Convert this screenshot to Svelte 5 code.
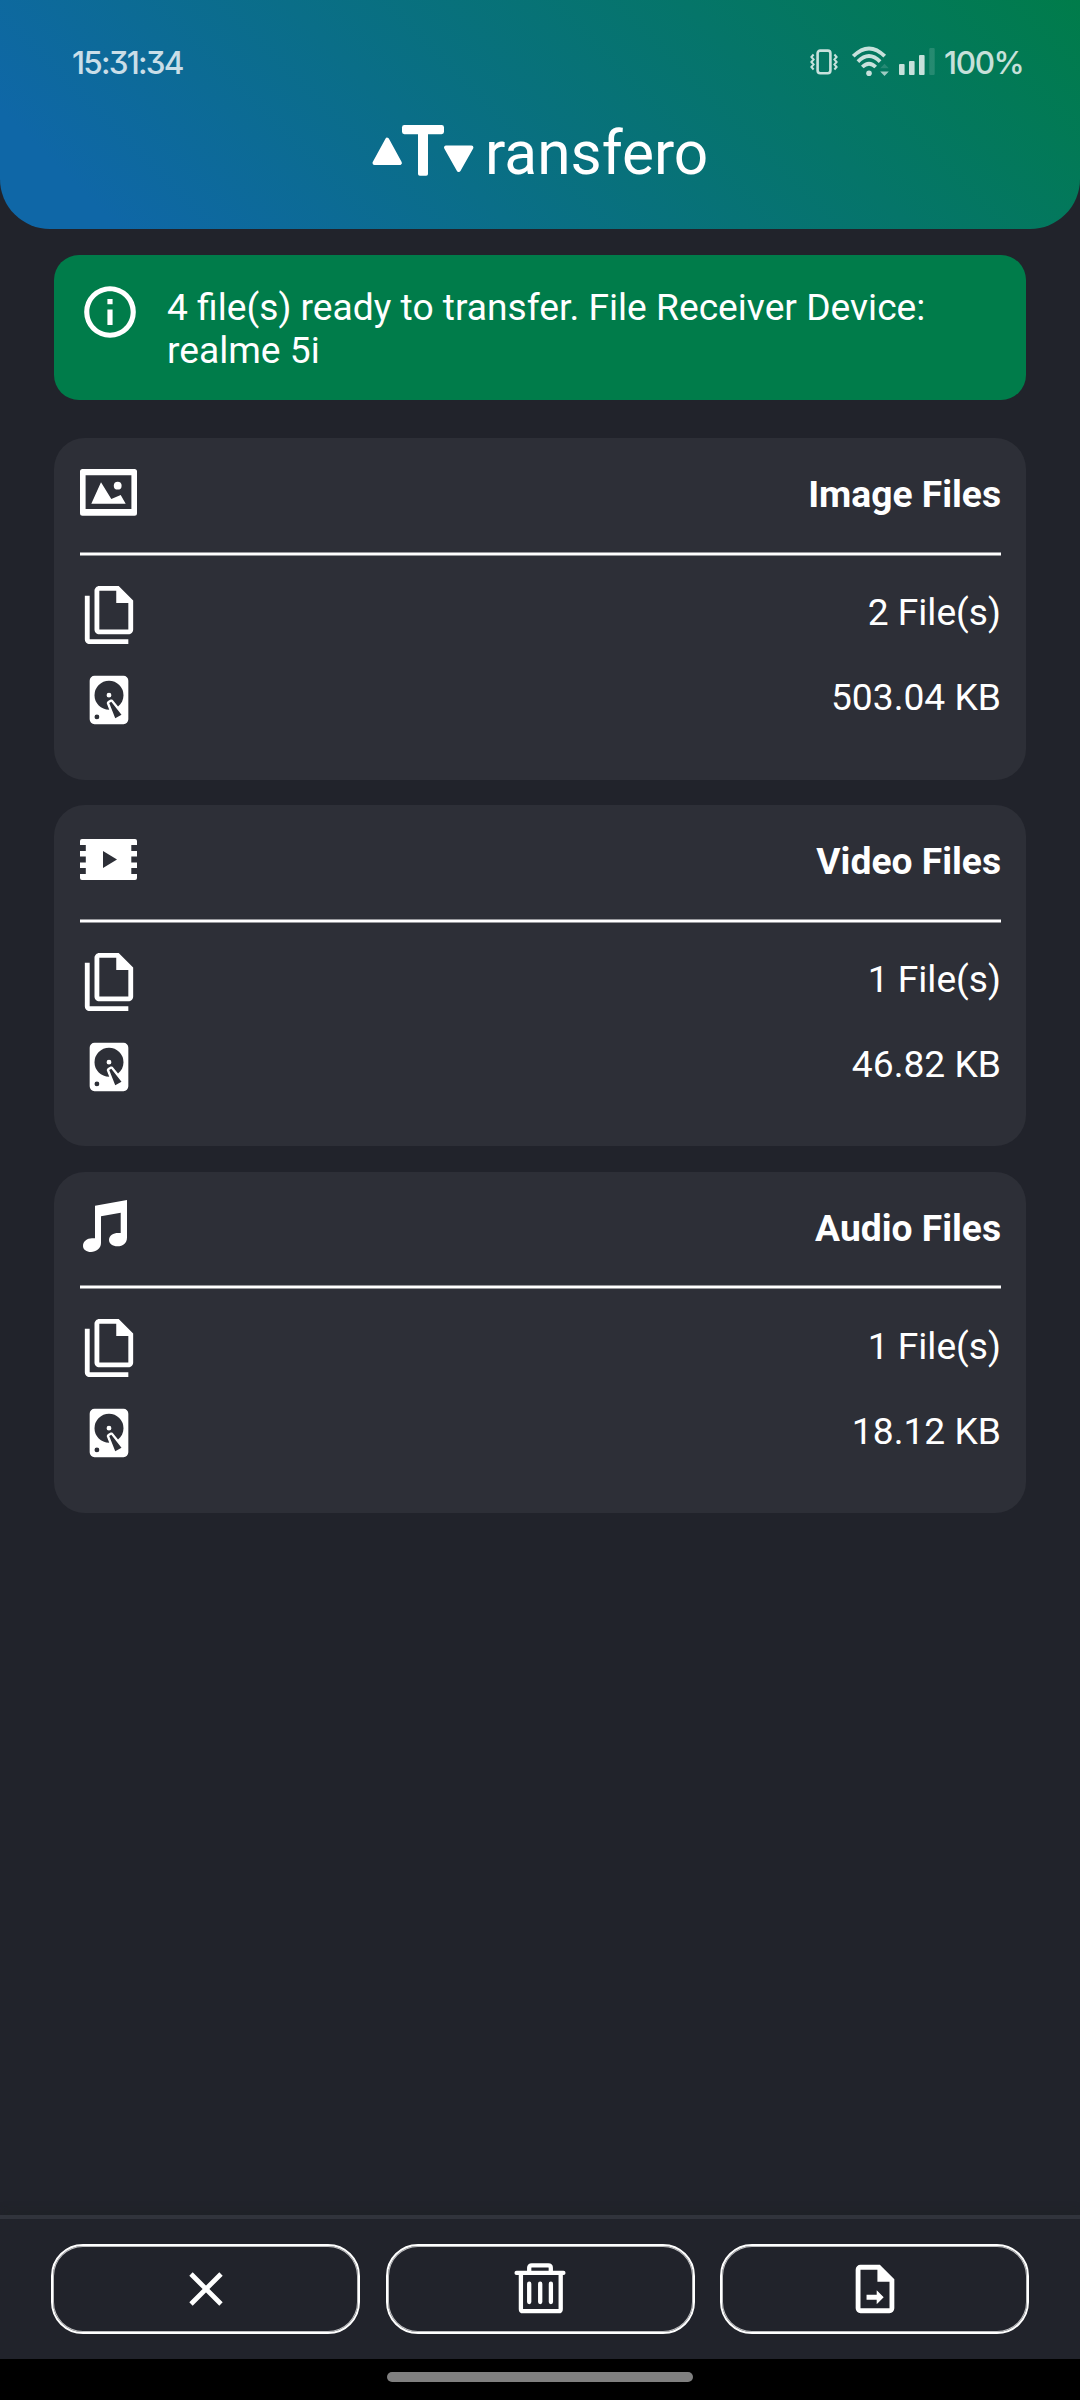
<script>
  const groups = [
    { kind: 'image', title: 'Image Files', count: '2 File(s)', size: '503.04 KB' },
    { kind: 'video', title: 'Video Files', count: '1 File(s)', size: '46.82 KB' },
    { kind: 'audio', title: 'Audio Files', count: '1 File(s)', size: '18.12 KB' }
  ];
</script>

<div class="screen">
  <header>
    <div class="status">
      <span class="clock">15:31:34</span>
      <div class="indicators">
        <svg class="vibrate" width="28" height="26" viewBox="0 0 28 26">
          <rect x="7.6" y="1.6" width="12.8" height="22.6" rx="2.6" />
          <path d="M3.6 5.5L1.4 8L3.6 10.5L1.4 13L3.6 15.5L1.4 18L3.6 20.5M24.4 5.5L26.6 8L24.4 10.5L26.6 13L24.4 15.5L26.6 18L24.4 20.5" />
        </svg>
        <svg class="wifi" width="38" height="32" viewBox="0 0 38 32">
          <path class="arc" d="M1.3 10.2Q17 -5.4 32.7 10.2M5.9 15.6Q17 4.6 28.1 15.6M10.3 21Q17 14.6 23.7 21" />
          <circle cx="17" cy="27.3" r="2.8" />
          <path class="faint" d="M28.2 22.2L32.5 17.8L36.8 22.2Z" />
          <path class="half" d="M28.2 25.5L32.5 30L36.8 25.5Z" />
        </svg>
        <svg class="signal" width="36" height="28" viewBox="0 0 36 28">
          <rect x="0" y="16" width="5.6" height="11" rx="1" />
          <rect x="10" y="13" width="5.6" height="14" rx="1" />
          <rect x="20" y="7" width="5.6" height="20" rx="1" />
          <rect class="faint" x="30.3" y="0" width="5.4" height="27" rx="1" />
        </svg>
        <span class="battery">100%</span>
      </div>
    </div>
    <div class="brand">
      <svg class="mark" width="103" height="52" viewBox="0 0 103 52" aria-label="T">
        <path class="tri" d="M15.2 14.7L27.9 38H2.5Z" />
        <rect x="30" y="0" width="42" height="9.2" rx="2.4" />
        <rect x="46" y="2" width="10" height="48.8" rx="1.8" />
        <path class="tri" d="M74 22.5H99.4L86.7 45Z" />
      </svg>
      <span class="name">ransfero</span>
    </div>
  </header>

  <main>
    <section class="notice">
      <svg width="62" height="62" viewBox="0 0 24 24">
        <path d="M11 9h2V7h-2m1 13c-4.41 0-8-3.59-8-8s3.59-8 8-8 8 3.59 8 8-3.59 8-8 8m0-18A10 10 0 0 0 2 12a10 10 0 0 0 10 10 10 10 0 0 0 10-10A10 10 0 0 0 12 2m-1 15h2v-6h-2v6Z" />
      </svg>
      <p>4 file(s) ready to transfer. File Receiver Device: realme 5i</p>
    </section>

    <div class="cards">
      {#each groups as group}
        <article>
          <div class="head">
            {#if group.kind === 'image'}
              <svg width="57" height="47" viewBox="0 0 57 47">
                <path fill-rule="evenodd" d="M2.5 0H54.5A2.5 2.5 0 0 1 57 2.5V44.3A2.5 2.5 0 0 1 54.5 46.8H2.5A2.5 2.5 0 0 1 0 44.3V2.5A2.5 2.5 0 0 1 2.5 0ZM5.6 6.3V40H51.4V6.3Z" />
                <path d="M11.3 34.7L21 13.3L31.3 30L40.7 26L45.7 34.7Z" />
                <circle cx="37.7" cy="16.7" r="3.9" />
              </svg>
            {:else if group.kind === 'video'}
              <svg width="57" height="41" viewBox="0 0 57 41">
                <path fill-rule="evenodd" d="M2 0H55A2 2 0 0 1 57 2V6H51.3V12H57V17.6H51.3V23.4H57V29H51.3V35H57V39A2 2 0 0 1 55 41H2A2 2 0 0 1 0 39V35H5.8V29H0V23.4H5.8V17.6H0V12H5.8V6H0V2A2 2 0 0 1 2 0ZM23 12V29L37 20.5Z" />
              </svg>
            {:else}
              <svg class="notes" width="44" height="52" viewBox="0 0 44 52">
                <path d="M12 5.7L44 0V37.5C44 43 40 46.3 34.5 46.3C29.5 46.3 26 43.7 26 40C26 35.5 30.5 33 35 33H37.7V12.7L18 16.3V43C18 48.5 13 52 8 52C3.5 52 0 49.5 0 46C0 41.5 4 38.3 9 38.3H12Z" />
              </svg>
            {/if}
            <h2>{group.title}</h2>
          </div>
          <div class="rule"></div>
          <div class="row">
            <svg width="58" height="58" viewBox="0 0 24 24">
              <path d="M16 0H8C6.9 0 6 .9 6 2V18C6 19.1 6.9 20 8 20H20C21.1 20 22 19.1 22 18V6L16 0M20 18H8V2H15V7H20V18M4 4V22H20V24H4C2.9 24 2 23.1 2 22V4H4Z" />
            </svg>
            <span>{group.count}</span>
          </div>
          <div class="row">
            <svg width="58" height="58" viewBox="0 0 24 24">
              <path d="M6,2H18A2,2 0 0,1 20,4V20A2,2 0 0,1 18,22H6A2,2 0 0,1 4,20V4A2,2 0 0,1 6,2M12,4A6,6 0 0,0 6,10C6,13.31 8.69,16 12.1,16L11.22,13.77C10.95,13.29 11.11,12.68 11.59,12.4L12.45,11.9C12.93,11.63 13.54,11.79 13.82,12.27L15.74,14.69C17.12,13.59 18,11.9 18,10A6,6 0 0,0 12,4M12,9A1,1 0 0,1 13,10A1,1 0 0,1 12,11A1,1 0 0,1 11,10A1,1 0 0,1 12,9M7,18A1,1 0 0,0 6,19A1,1 0 0,0 7,20A1,1 0 0,0 8,19A1,1 0 0,0 7,18M12.09,13.27L14.58,19.58L17.17,18.08L12.95,12.77L12.09,13.27Z" />
            </svg>
            <span>{group.size}</span>
          </div>
        </article>
      {/each}
    </div>
  </main>

  <footer>
    <button aria-label="Cancel">
      <svg class="cross" width="34" height="34" viewBox="0 0 34 34">
        <path d="M2 2L32 32M32 2L2 32" />
      </svg>
    </button>
    <button aria-label="Delete">
      <svg class="trash" width="52" height="52" viewBox="0 0 52 52">
        <path d="M2.6 9.9H49.4M6.9 9.9V46.2Q6.9 48.2 8.9 48.2H44.7Q46.7 48.2 46.7 46.2V9.9M15.2 9.5V4.8Q15.2 2.3 17.7 2.3H34.3Q36.8 2.3 36.8 4.8V9.5M15.2 20.7V39M26.2 20.7V39M36.9 20.7V39" />
      </svg>
    </button>
    <button aria-label="Send">
      <svg width="58" height="58" viewBox="0 0 24 24">
        <path d="M14,2H6A2,2 0 0,0 4,4V20A2,2 0 0,0 6,22H18A2,2 0 0,0 20,20V8L14,2M18,20H6V4H13V9H18V20M8.5 14.35H12.7V12.5L15.6 15.4L12.7 18.3V16.4H8.5Z" />
      </svg>
    </button>
  </footer>
  <div class="navbar"><div class="handle"></div></div>
</div>

<style>
  :global(body) {
    margin: 0;
    background: #21232b;
  }
  .screen {
    width: 1080px;
    height: 2400px;
    display: flex;
    flex-direction: column;
    background: #21232b;
    color: #fff;
    font-family: Roboto, 'Liberation Sans', sans-serif;
    font-size: 37.2px;
    line-height: 43px;
    overflow: hidden;
  }
  svg {
    display: block;
    flex: none;
    fill: #fff;
  }
  header {
    flex: none;
    box-sizing: border-box;
    height: 229px;
    padding-top: 36px;
    border-radius: 0 0 50px 50px;
    background: linear-gradient(45deg, #0f67a7 9%, #007c4a);
  }
  .status {
    height: 52px;
    display: flex;
    align-items: center;
    justify-content: space-between;
    padding: 0 56.5px 0 72px;
    font-family: Inter, Roboto, sans-serif;
    font-size: 31.5px;
    opacity: 0.78;
  }
  .clock {
    font-feature-settings: 'cv09';
    font-weight: 450;
    letter-spacing: -1.8px;
  }
  .battery {
    font-weight: 450;
    letter-spacing: -1.4px;
  }
  .indicators {
    display: flex;
    align-items: center;
  }
  .vibrate {
    margin-right: 14px;
  }
  .vibrate rect {
    fill: none;
    stroke: #fff;
    stroke-width: 2.6;
  }
  .vibrate path {
    fill: none;
    stroke: #fff;
    stroke-width: 2;
  }
  .wifi {
    margin-right: 9px;
  }
  .arc {
    fill: none;
    stroke: #fff;
    stroke-width: 3.8;
  }
  .faint {
    opacity: 0.18;
  }
  .half {
    opacity: 0.8;
  }
  .signal {
    margin-right: 9.5px;
  }
  .brand {
    display: flex;
    align-items: flex-start;
    padding: 37px 0 0 372px;
  }
  .tri {
    stroke: #fff;
    stroke-width: 4;
    stroke-linejoin: round;
  }
  .name {
    margin: -1px 0 0 10px;
    font-size: 60.4px;
    line-height: 60px;
  }
  main {
    flex: 1;
    padding: 26px 54px 0;
  }
  .notice {
    box-sizing: border-box;
    height: 145px;
    display: flex;
    padding: 26px 24px 0 25px;
    border-radius: 25px;
    background: #007c4a;
  }
  .notice p {
    width: 800px;
    margin: 5px 0 0 26px;
  }
  .cards {
    display: flex;
    flex-direction: column;
    gap: 25.2px;
    padding-top: 38.25px;
  }
  article {
    box-sizing: border-box;
    height: 341.47px;
    padding: 0 25px 0 26px;
    border-radius: 31px;
    background: #2d2f37;
  }
  .head {
    height: 113.8px;
    box-sizing: border-box;
    padding-bottom: 4.5px;
    display: flex;
    align-items: center;
    justify-content: space-between;
  }
  .notes {
    margin-left: 3px;
  }
  h2 {
    margin: 0;
    padding-top: 3.6px;
    font-size: inherit;
    font-weight: 700;
  }
  .rule {
    height: 4px;
    margin-bottom: 16.4px;
    background: linear-gradient(#97989c 1px, #fff 1px, #fff 3px, #97989c 3px);
  }
  .row {
    height: 85px;
    display: flex;
    align-items: center;
    justify-content: space-between;
  }
  .row svg {
    margin-left: -0.3px;
  }
  .row span {
    padding-bottom: 4.4px;
  }
  footer {
    flex: none;
    box-sizing: border-box;
    height: 144px;
    display: grid;
    grid-template-columns: 309px 309px 309px;
    gap: 25.5px;
    padding: 25px 51px 0;
    border-top: 4px solid #31343c;
    box-shadow: 0 -4px 8px rgba(30, 34, 34, 0.4);
  }
  button {
    height: 90px;
    padding: 0;
    display: flex;
    align-items: center;
    justify-content: center;
    border: 2px solid #fff;
    border-radius: 32px;
    background: none;
    box-shadow: inset 0 0 0 1px rgba(255, 255, 255, 0.7);
  }
  .cross path {
    stroke: #fff;
    stroke-width: 4.8;
  }
  .trash path {
    fill: none;
    stroke: #fff;
    stroke-width: 4.3;
    stroke-linecap: round;
  }
  .navbar {
    flex: none;
    height: 41px;
    background: #000;
    display: flex;
    justify-content: center;
  }
  .handle {
    width: 306px;
    height: 10px;
    margin-top: 13px;
    border-radius: 5px;
    background: #808080;
  }
</style>
